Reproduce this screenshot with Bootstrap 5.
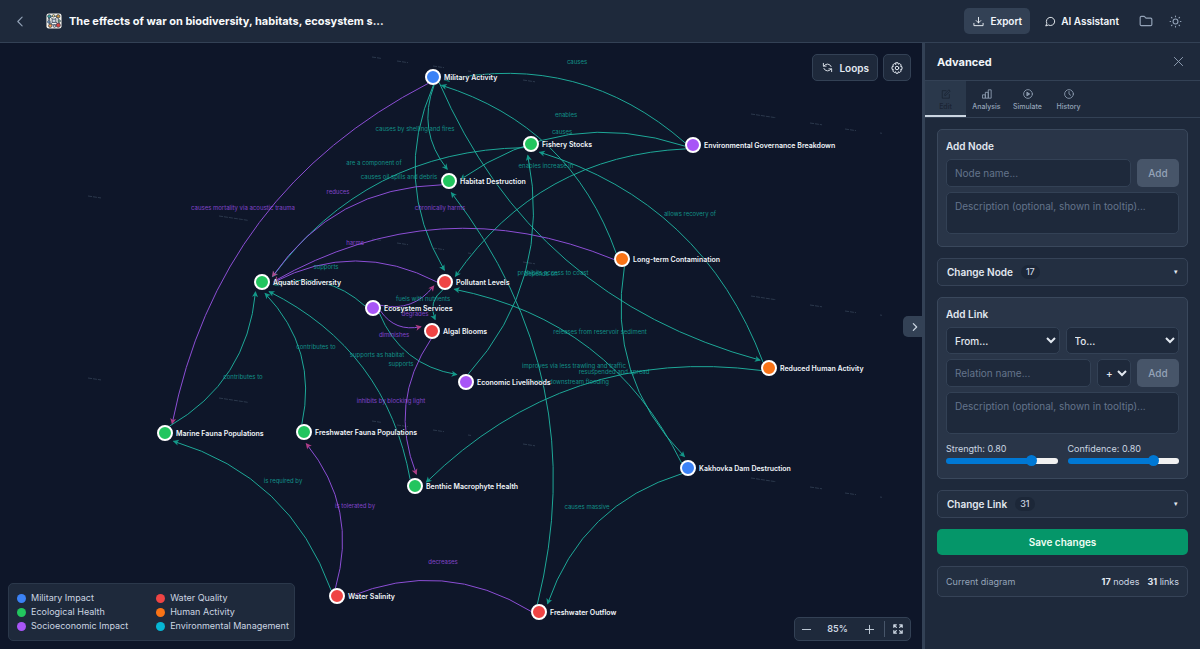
<!DOCTYPE html>
<html lang="en">
<head>
<meta charset="utf-8">
<meta name="viewport" content="width=device-width, initial-scale=1">
<title>The effects of war on biodiversity, habitats, ecosystem services</title>
<link href="https://cdn.jsdelivr.net/npm/bootstrap@5.3.0/dist/css/bootstrap.min.css" rel="stylesheet">
<style>
  :root { --ink:#0e1629; --panel:#1e293b; --line:#334155; --soft:#94a3b8; --text:#e2e8f0; }
  body { font-family:Inter,"Liberation Sans",sans-serif; font-size:10px; line-height:16px; background:var(--ink); color:var(--text); }
  svg { display:block; }
  .ico { fill:none; stroke:currentColor; stroke-width:2; stroke-linecap:round; stroke-linejoin:round; flex:none; }
  .bold { stroke-width:3; }
  .topbar { height:43px; background:var(--panel); border-bottom:1px solid var(--line); padding:0 18px 0 14px; }
  .topbar h1 { font-size:11px; line-height:16px; font-weight:700; color:#f8fafc; margin:0 0 0 7px; }
  .appmark { margin-left:19px; flex:none; }
  .plain { background:none; border:0; padding:0; color:var(--soft); }
  .btn { --bs-btn-font-size:10px; --bs-btn-line-height:16px; --bs-btn-border-radius:5px; font-weight:600; }
  .btn-export { background:var(--line); color:#f1f5f9; padding:5px 8px 5px 9px; border:0; height:26px; gap:6px; }
  .btn-ai { margin:0 20px 0 15px; gap:5px; color:#f1f5f9; font-weight:600; }
  .btn-tool { background:var(--panel); color:var(--text); border:1px solid var(--line); height:27px; padding:0 7px; }
  .btn-loops { gap:6px; padding:0 8px 0 9px; }
  .stage { min-width:0; overflow:hidden; }
  .stage > svg { width:100%; height:100%; }
  .edge { fill:none; stroke-width:1; opacity:.9; }
  .rel { font-size:6px; text-anchor:middle; opacity:.75; }
  .node { stroke:#fff; stroke-width:2; }
  .tag { font-size:7px; font-weight:600; fill:#f1f5f9; stroke:#0f172a; stroke-width:1; paint-order:stroke; }
  .tick { stroke:#334155; stroke-width:1; stroke-dasharray:4 1; opacity:.8; }
  .tools { top:11px; right:11px; gap:5px; }
  .legend { left:8px; bottom:8px; background:var(--panel); border:1px solid #2b384b; border-radius:5px; padding:7px 5px 7px 8px; display:grid; grid-template-columns:auto auto; column-gap:28px; font-size:9px; line-height:14px; color:#cbd5e1; }
  .legend div { gap:5px; }
  .dot { width:9px; height:9px; border-radius:50%; }
  .zoomer { right:11px; bottom:8px; height:24px; background:var(--panel); border:1px solid var(--line); border-radius:5px; color:#cbd5e1; }
  .zoomer output { width:41px; text-align:center; font-size:9px; font-weight:600; }
  .zoomer .plain { width:22px; display:flex; justify-content:center; color:#cbd5e1; }
  .zoomer .full { width:26px; height:16px; align-items:center; border-left:1px solid #475569; margin-left:4px; }
  .grip { right:0; top:273px; width:19px; height:21px; background:var(--line); border:0; border-radius:5px 0 0 5px; padding:0 0 0 4px; color:#cbd5e1; }
  .main-row { min-height:0; }
  .side { width:278px; flex:none; background:var(--panel); border-left:3px solid var(--line); overflow:auto; }
  .side h2 { font-size:11px; line-height:16px; font-weight:700; color:#f1f5f9; }
  .side-head { height:38px; padding:0 16px 0 12px; border-bottom:1px solid var(--line); }
  .tabs { height:37px; border-bottom:1px solid var(--line); }
  .tabs button { background:none; border:0; border-bottom:2px solid transparent; padding:3px 0 0; width:41px; font-size:7px; line-height:8px; font-weight:500; color:var(--soft); display:flex; flex-direction:column; align-items:center; justify-content:center; gap:4px; }
  .tabs button.on { background:#2a384b; border-bottom-color:#cbd5e1; color:#1b2433; }
  .stack { padding:11px 12px; display:flex; flex-direction:column; gap:11px; }
  .box { background:#293548; border:1px solid #3a485c; border-radius:5px; padding:8px; display:flex; flex-direction:column; gap:5px; }
  .box-node { padding-bottom:12px; }
  .box h3 { font-size:10px; line-height:16px; font-weight:600; margin:0; color:var(--text); }
  .line-row { display:flex; gap:6px; }
  .fld { background:var(--panel); border:1px solid var(--line); border-radius:5px; color:var(--text); font-size:10px; line-height:16px; padding:0 8px; height:28px; min-width:0; width:100%; }
  .fld::placeholder { color:#64748b; opacity:1; }
  textarea.fld { height:42px; padding:5px 8px; resize:none; display:block; }
  select.fld { height:27px; padding:0 0 0 4px; font-weight:500; }
  select.sign { width:34px; flex:none; height:28px; }
  .btn-add { width:42px; height:28px; flex:none; background:#475569; color:var(--soft); border:0; padding:0; font-weight:500; }
  .fold { height:28px; background:#232f41; border:1px solid #364357; border-radius:5px; color:var(--text); font-size:10px; font-weight:600; padding:0 9px; }
  .count { background:#1c2738; border-radius:9px; padding:0 5px; line-height:14px; font-size:9px; font-weight:500; color:#cbd5e1; }
  .arrow { font-size:7px; font-weight:400; }
  .btn-save { background:#059669; color:#f0fdf4; height:26px; border:0; padding:0; }
  .summary { height:31px; font-size:9px; color:var(--soft); background:#232f41; border:1px solid #364357; border-radius:5px; padding:0 8px; }
  .summary b { color:var(--text); font-weight:700; }
  .summary span span { color:#cbd5e1; }
  .dial { display:flex; gap:10px; padding:4px 0; }
  .dial label { display:block; font-size:9px; line-height:12px; color:#cbd5e1; }
  .dial input { appearance:none; -webkit-appearance:none; display:block; width:100%; height:11px; margin:0; background:none; }
  .dial input::-webkit-slider-runnable-track { height:6px; border-radius:3px; background:linear-gradient(90deg,#0078d4 77%,#f1f1f1 77%); }
  .dial input::-webkit-slider-thumb { -webkit-appearance:none; width:11px; height:11px; margin-top:-3px; border-radius:50%; background:#0078d4; border:0; }
</style>
</head>
<body class="vh-100 d-flex flex-column overflow-hidden">
<header class="topbar d-flex align-items-center flex-shrink-0">
  <button class="plain" aria-label="Back"><svg class="ico" width="13" height="13" viewBox="0 0 24 24"><path d="M15 4l-8 8 8 8"/></svg></button>
  <svg class="appmark" width="16" height="16" viewBox="0 0 34 34"><rect x="1" y="1" width="32" height="32" rx="5" fill="#f4f1ea"/><g fill="none" stroke="#475569" stroke-width="2"><path d="M7 7h18l3 18H9L7 7l21 18M25 7L9 25M7 8c-5 8 0 14 3 17"/><path d="M13 13h8v7h-8z" fill="#cbd5e1"/></g><g stroke="#334155" stroke-width="1.6"><circle cx="7" cy="7" r="3.4" fill="#38a29c"/><circle cx="16" cy="6" r="2.6" fill="#fde68a"/><circle cx="26" cy="7" r="3.6" fill="#c9903b"/><circle cx="6" cy="19" r="2.600" fill="#7aa7d9"/><circle cx="28" cy="17" r="2.600" fill="#8bc48a"/><circle cx="9" cy="27" r="3.600" fill="#f2994a"/><circle cx="18" cy="28" r="2.600" fill="#d1d5db"/><circle cx="26" cy="26" r="4.500" fill="#d9433f"/></g></svg>
  <h1 class="text-truncate">The effects of war on biodiversity, habitats, ecosystem s...</h1>
  <div class="ms-auto d-flex align-items-center flex-shrink-0">
    <button class="btn btn-export d-flex align-items-center"><svg class="ico" width="11" height="11" viewBox="0 0 24 24"><path d="M12 3v12M7 10l5 5 5-5M2 16v5h20v-5"/></svg>Export</button>
    <button class="plain btn-ai d-flex align-items-center"><svg class="ico" width="11" height="11" viewBox="0 0 24 24"><path d="M2 21l2-5a9 9 0 1 1 4 4z"/></svg>AI Assistant</button>
    <button class="plain" aria-label="Files"><svg class="ico" width="14" height="14" viewBox="0 0 24 24"><path d="M2 6a2 2 0 0 1 2-2h5l3 3h8a2 2 0 0 1 2 2v9a2 2 0 0 1-2 2H4a2 2 0 0 1-2-2z"/></svg></button>
    <button class="plain ms-3" aria-label="Theme"><svg class="ico" width="13" height="13" viewBox="0 0 24 24"><circle cx="12" cy="12" r="4.500"/><path d="M12 2v1M12 21v1M2 12h1M21 12h1M4.500 4.500l1 1M18.500 18.500l1 1M4.500 19.500l1-1M18.500 5.500l1-1"/></svg></button>
  </div>
</header>

<div class="main-row d-flex flex-grow-1">
  <main class="stage position-relative flex-grow-1">
    <svg id="graph" role="img" aria-label="Causal diagram"></svg>

    <div class="tools position-absolute d-flex">
      <button class="btn btn-tool btn-loops d-flex align-items-center"><svg class="ico" width="11" height="11" viewBox="0 0 24 24"><path d="M3 3v6h6M21 21v-6h-6M4 9a9 9 0 0 1 16 1M20 15a9 9 0 0 1-16-1"/></svg>Loops</button>
      <button class="btn btn-tool" aria-label="Settings"><svg class="ico" width="12" height="12" viewBox="0 0 24 24"><circle cx="12" cy="12" r="3.500"/><path d="M10 1.500h4l.8 3 2.700-1.500 3 3-1.500 2.700 3 .8v5l-3 .8 1.500 2.700-3 3-2.700-1.500-.8 3h-4l-.8-3L6.500 21l-3-3L5 15.300l-3-.8v-5l3-.8L3.500 6l3-3 2.700 1.500z"/></svg></button>
    </div>

    <button class="grip position-absolute" aria-label="Collapse panel"><svg class="ico bold m-auto" width="10" height="10" viewBox="0 0 24 24"><path d="M8 4l8 8-8 8"/></svg></button>

    <div class="legend position-absolute" id="legend"></div>

    <div class="zoomer position-absolute d-flex align-items-center">
      <button class="plain" aria-label="Zoom out"><svg class="ico" width="11" height="11" viewBox="0 0 24 24"><path d="M3 12h18"/></svg></button>
      <output>85%</output>
      <button class="plain" aria-label="Zoom in"><svg class="ico" width="11" height="11" viewBox="0 0 24 24"><path d="M3 12h18M12 3v18"/></svg></button>
      <button class="plain full" aria-label="Fit to screen"><svg class="ico bold" width="10" height="10" viewBox="0 0 24 24"><path d="M2 8V2h6M2 2l6 6M16 2h6v6M22 2l-6 6M2 16v6h6M2 22l6-6M22 16v6h-6M22 22l-6-6"/></svg></button>
    </div>
  </main>

  <aside class="side">
    <div class="side-head d-flex align-items-center justify-content-between">
      <h2 class="m-0">Advanced</h2>
      <button class="plain" aria-label="Close"><svg class="ico" width="11" height="11" viewBox="0 0 24 24"><path d="M3 3l18 18M21 3L3 21"/></svg></button>
    </div>
    <nav class="tabs d-flex">
      <button class="on"><svg class="ico" width="10" height="10" viewBox="0 0 24 24"><path d="M12 4H3v18h17v-9M9 15v-3L19 2l3 3-10 10z"/></svg>Edit</button>
      <button><svg class="ico" width="10" height="10" viewBox="0 0 24 24"><path d="M2 14h6v8H2zM9 8h6v14H9zM16 2h6v20h-6z"/></svg>Analysis</button>
      <button><svg class="ico" width="10" height="10" viewBox="0 0 24 24"><circle cx="12" cy="12" r="10.500"/><path d="M10 8l6 4-6 4z" fill="currentColor"/></svg>Simulate</button>
      <button><svg class="ico" width="10" height="10" viewBox="0 0 24 24"><circle cx="12" cy="12" r="10.500"/><path d="M12 6v6l4 3"/></svg>History</button>
    </nav>
    <div class="stack">
      <section class="box box-node">
        <h3>Add Node</h3>
        <div class="line-row">
          <input class="fld" placeholder="Node name..." aria-label="Node name">
          <button class="btn btn-add">Add</button>
        </div>
        <textarea class="fld" placeholder="Description (optional, shown in tooltip)..." aria-label="Node description"></textarea>
      </section>
      <button class="fold d-flex align-items-center"><span>Change Node</span><span class="count ms-2">17</span><span class="arrow ms-auto">▾</span></button>
      <section class="box">
        <h3>Add Link</h3>
        <div class="line-row">
          <select class="fld" aria-label="From"><option>From...</option></select>
          <select class="fld" aria-label="To"><option>To...</option></select>
        </div>
        <div class="line-row">
          <input class="fld" placeholder="Relation name..." aria-label="Relation name">
          <select class="fld sign" aria-label="Polarity"><option>+</option></select>
          <button class="btn btn-add">Add</button>
        </div>
        <textarea class="fld" placeholder="Description (optional, shown in tooltip)..." aria-label="Link description"></textarea>
        <div class="dial">
          <div class="flex-fill"><label for="st">Strength: 0.80</label><input id="st" type="range" min="0" max="1" step="0.05" value="0.8"></div>
          <div class="flex-fill"><label for="cf">Confidence: 0.80</label><input id="cf" type="range" min="0" max="1" step="0.05" value="0.8"></div>
        </div>
      </section>
      <button class="fold d-flex align-items-center"><span>Change Link</span><span class="count ms-2">31</span><span class="arrow ms-auto">▾</span></button>
      <button class="btn btn-save">Save changes</button>
      <div class="summary d-flex align-items-center justify-content-between"><span>Current diagram</span><span><span class="me-2"><b>17</b> nodes</span><span><b>31</b> links</span></span></div>
    </div>
  </aside>
</div>

<script src="https://cdn.jsdelivr.net/npm/bootstrap@5.3.0/dist/js/bootstrap.bundle.min.js"></script>
<script>
const C = {mil:'#3b82f6', eco:'#22c55e', soc:'#a855f7', wat:'#ef4444', hum:'#f97316', env:'#06b6d4'};
const legend = [['mil','Military Impact'],['wat','Water Quality'],['eco','Ecological Health'],['hum','Human Activity'],['soc','Socioeconomic Impact'],['env','Environmental Management']];
document.getElementById('legend').innerHTML = legend.map(([k,t]) =>
  `<div class="d-flex align-items-center text-nowrap"><span class="dot" style="background:${C[k]}"></span>${t}</div>`).join('');

/* id: x, y, group, label */
const N = {
  MA:[433,34,'mil','Military Activity'], FS:[531,101,'eco','Fishery Stocks'], EG:[693,102,'soc','Environmental Governance Breakdown'],
  HD:[449,138,'eco','Habitat Destruction'], LC:[622,216,'hum','Long-term Contamination'], AB:[262,239,'eco','Aquatic Biodiversity'],
  PL:[445,239,'wat','Pollutant Levels'], ES:[373,265,'soc','Ecosystem Services'], AL:[432,288,'wat','Algal Blooms'],
  RH:[769,325,'hum','Reduced Human Activity'], EL:[466,339,'soc','Economic Livelihoods'], MF:[165,390,'eco','Marine Fauna Populations'],
  FF:[304,389,'eco','Freshwater Fauna Populations'], BM:[415,443,'eco','Benthic Macrophyte Health'], KD:[688,425,'mil','Kakhovka Dam Destruction'],
  WS:[337,553,'wat','Water Salinity'], FO:[539,569,'wat','Freshwater Outflow']
};
/* source, target, sign, relation, label x, label y */
const E = [
  ['MA','MF','-','causes mortality via acoustic trauma',243,165], ['MA','HD','+','causes by shelling and fires',415,86],
  ['MA','PL','+','causes oil spills and debris',399,134], ['MA','RH','+','prohibits access to coast',553,230],
  ['EG','MA','+','causes',577,19], ['LC','MA','+','enables',566,72], ['EG','HD','+','causes',562,89],
  ['EG','PL','+','enables increase in',546,123], ['FS','AB','+','are a component of',374,120], ['HD','AB','-','reduces',338,149],
  ['LC','AB','-','chronically harms',440,165], ['PL','AB','-','harms',355,200], ['ES','AB','+','supports',326,224],
  ['ES','PL','-','degrades',415,271], ['ES','AL','-','diminishes',394,292], ['PL','AL','+','fuels with nutrients',423,256],
  ['ES','EL','+','supports',401,321], ['EL','FS','+','depends on',541,231], ['RH','FS','+','allows recovery of',690,171],
  ['RH','BM','+','improves via less trawling and traffic',574,323], ['KD','PL','+','releases from reservoir sediment',600,289],
  ['LC','KD','+','resuspended and spread',614,329], ['KD','FO','+','causes massive',587,464], ['FO','HD','+','causes downstream flooding',568,339],
  ['AL','BM','-','inhibits by blocking light',391,358], ['BM','AB','+','supports as habitat',377,312], ['FF','AB','+','contributes to',316,304],
  ['MF','AB','+','contributes to',243,334], ['WS','MF','+','is required by',283,438], ['WS','FF','-','is tolerated by',355,463],
  ['FO','WS','-','decreases',443,519]
];
const CURVE = 0.23, OUT = 8, IN = 12;
let s = `<defs><marker id="up" markerUnits="userSpaceOnUse" markerWidth="8" markerHeight="8" refX="6" refY="4" orient="auto"><path d="M1 1L7 4 1 7 2.500 4z" fill="#14a794"/></marker>
<marker id="down" markerUnits="userSpaceOnUse" markerWidth="8" markerHeight="8" refX="6" refY="4" orient="auto"><path d="M1 1L7 4 1 7 2.500 4z" fill="#c0428f"/></marker></defs>`;
const ticks = [[88,-29,13],[219,-9,29],[372,14,9],[397,18,11],[433,23,11],[468,28,3],[523,37,12],[751,71,25],[810,80,12],[845,86,11],[880,90,2]];
for (let k = 0; k < 3; k++) for (const [x,y,l] of ticks)
  s += `<line class="tick" x1="${x}" y1="${y+182*k}" x2="${x+l}" y2="${y+182*k+l*0.15}"/>`;
for (const [a,b,sign] of E) {
  const [ax,ay] = N[a], [bx,by] = N[b], dx = bx-ax, dy = by-ay, L = Math.hypot(dx,dy), u = dx/L, v = dy/L;
  const x1 = ax+u*OUT, y1 = ay+v*OUT, x2 = bx-u*IN, y2 = by-v*IN, cx = (x1+x2)/2-dy*CURVE, cy = (y1+y2)/2+dx*CURVE;
  s += `<path class="edge" stroke="${sign==='+'?'#20b8a4':'#9a55e8'}" marker-end="url(#${sign==='+'?'up':'down'})" d="M${x1} ${y1}Q${cx} ${cy} ${x2} ${y2}"/>`;
}
for (const e of E) s += `<text class="rel" fill="${e[2]==='+'?'#14b8a6':'#a855f7'}" x="${e[4]}" y="${e[5]+2}">${e[3]}</text>`;
for (const [x,y,g,t] of Object.values(N))
  s += `<circle class="node" cx="${x}" cy="${y}" r="7" fill="${C[g]}"/><text class="tag" x="${x+11}" y="${y+3}">${t}</text>`;
document.getElementById('graph').innerHTML = s;
</script>
</body>
</html>
